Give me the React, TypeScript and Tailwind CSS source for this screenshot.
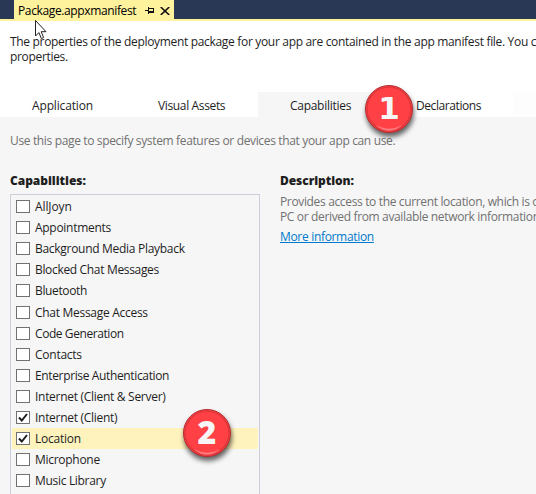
const capabilities = [
  { name: 'AllJoyn', track: 'tracking-[-0.1px]' },
  { name: 'Appointments', track: 'tracking-[-0.28px]' },
  { name: 'Background Media Playback', track: 'tracking-[-0.29px]' },
  { name: 'Blocked Chat Messages', track: 'tracking-[-0.33px]' },
  { name: 'Bluetooth', track: 'tracking-[-0.37px]' },
  { name: 'Chat Message Access', track: 'tracking-[-0.29px]' },
  { name: 'Code Generation', track: 'tracking-[-0.42px]' },
  { name: 'Contacts', track: 'tracking-[-0.25px]' },
  { name: 'Enterprise Authentication', track: 'tracking-[-0.36px]' },
  { name: 'Internet (Client & Server)', track: 'tracking-[-0.29px]' },
  { name: 'Internet (Client)', track: 'tracking-[-0.29px]', checked: true },
  { name: 'Location', track: 'tracking-[-0.25px]', checked: true, selected: true },
  { name: 'Microphone', track: 'tracking-[-0.28px]' },
  { name: 'Music Library', track: 'tracking-[-0.31px]' },
];

function Badge({ label, place, face }: { label: string; place: string; face: string }) {
  return (
    <div
      className={`absolute flex h-12 w-12 items-center justify-center rounded-full border border-[#b52d31] bg-[#ff4145] pb-[2px] shadow-[1px_4px_5px_rgba(0,0,0,0.6)] ${place}`}
    >
      <span className={`leading-none text-[#f6f6f6] ${face}`}>{label}</span>
      <svg className="absolute inset-0" width="46" height="46" viewBox="0 0 46 46" fill="none">
        <circle cx="23" cy="23" r="22" stroke="#df373b" strokeWidth="1.5" />
        <path d="M11 40 Q23 46 35 40 Q23 49 11 40Z" fill="#ff8084" stroke="#ff7579" strokeWidth=".5" />
      </svg>
    </div>
  );
}

export default function App() {
  return (
    <div className="relative flex h-[494px] w-[536px] flex-col overflow-hidden bg-[#f6f6f6] font-['Open_Sans','Noto_Sans',sans-serif] text-[12px] whitespace-nowrap text-[#1e1e1e]">
      <header className="h-[21px] shrink-0 border-b-2 border-[#fff29d] bg-[#293955] pl-[14px]">
        <div className="flex h-[19px] w-[160px] items-center bg-[#fff29d] pt-[3px] pl-1 text-black">
          <span className="w-[127px] leading-4 tracking-[-0.37px]">Package.appxmanifest</span>
          <svg width="9" height="8" viewBox="0 0 9 8" fill="none" stroke="#111" shapeRendering="crispEdges">
            <path d="M0 3.5H3M3.5 0V7M3 1.5H8.5V5.5H3M3 4.5H8" />
          </svg>
          <svg className="ml-[6px]" width="10" height="8" viewBox="0 0 10 8" fill="none" stroke="#111" strokeWidth="1.6">
            <path d="M.7 0L9.3 8M9.3 0L.7 8" />
          </svg>
        </div>
      </header>

      <p className="h-[71px] shrink-0 bg-white pt-[13px] pl-[10px] leading-[15px] tracking-[-0.32px]">
        The properties of the deployment package for your app are contained in the app manifest file. You can set
        <br />
        properties.
      </p>

      <nav className="flex h-[25px] shrink-0 bg-white leading-[27px]">
        <span className="w-[129px] pl-8 tracking-[-0.15px]">Application</span>
        <span className="w-[129px] pl-[29px] tracking-[-0.36px]">Visual Assets</span>
        <span className="w-[129px] bg-[#f6f6f6] pl-8 tracking-[-0.28px]">Capabilities</span>
        <span className="w-[126px] pl-[29px] tracking-[-0.42px]">Declarations</span>
        <span className="flex-1 bg-[#fdfdfd]" />
      </nav>

      <p className="mt-4 ml-[10px] h-4 leading-4 tracking-[-0.35px] text-[#717171]">
        Use this page to specify system features or devices that your app can use.
      </p>

      <main className="mt-6 flex pl-[10px]">
        <section className="w-[270px] shrink-0">
          <h2 className="h-[21px] leading-4 font-extrabold tracking-[-0.04px]">Capabilities:</h2>
          <ul className="flex h-[310px] w-[250px] flex-col border border-[#cccedb] px-px pt-px">
            {capabilities.map((item, i) => (
              <li
                key={item.name}
                className={`flex shrink-0 pt-1 pl-1 ${i === 4 ? 'h-[22px]' : 'h-[21px]'} ${item.selected ? 'bg-[#fff3bd]' : ''}`}
              >
                <span className="h-[13px] w-[14px] border border-[#717171] bg-white">
                  {item.checked && (
                    <svg width="12" height="11" viewBox="0 0 12 11" fill="none" stroke="#1e1e1e" strokeWidth="2">
                      <path d="M2 5.5L4.8 8.5L10 2" />
                    </svg>
                  )}
                </span>
                <span className={`ml-[5px] leading-[13px] ${item.track}`}>{item.name}</span>
              </li>
            ))}
          </ul>
        </section>
        <section className="shrink-0">
          <h2 className="h-[21px] leading-4 font-extrabold tracking-[-0.06px]">Description:</h2>
          <p className="leading-[15px] tracking-[-0.35px] text-[#717171]">
            Provides access to the current location, which is obtained
            <br />
            PC or derived from available network information
          </p>
          <a className="mt-[5px] block leading-4 tracking-[-0.32px] text-[#007acc] underline">More information</a>
        </section>
      </main>

      <Badge label="1" place="top-[85px] left-[365px]" face="font-['DejaVu_Sans',sans-serif] text-[31px] font-bold" />
      <Badge label="2" place="top-[409px] left-[183px]" face="font-['Noto_Sans',sans-serif] text-[32px] font-black" />
      <svg className="absolute top-[19px] left-[34px]" width="13" height="21" viewBox="0 0 13 21">
        <path d="M1.5 1.5V17L4.9 13.6L7.4 19.6L9.6 18.6L7.2 12.7H12Z" fill="white" stroke="#222" />
      </svg>
    </div>
  );
}
